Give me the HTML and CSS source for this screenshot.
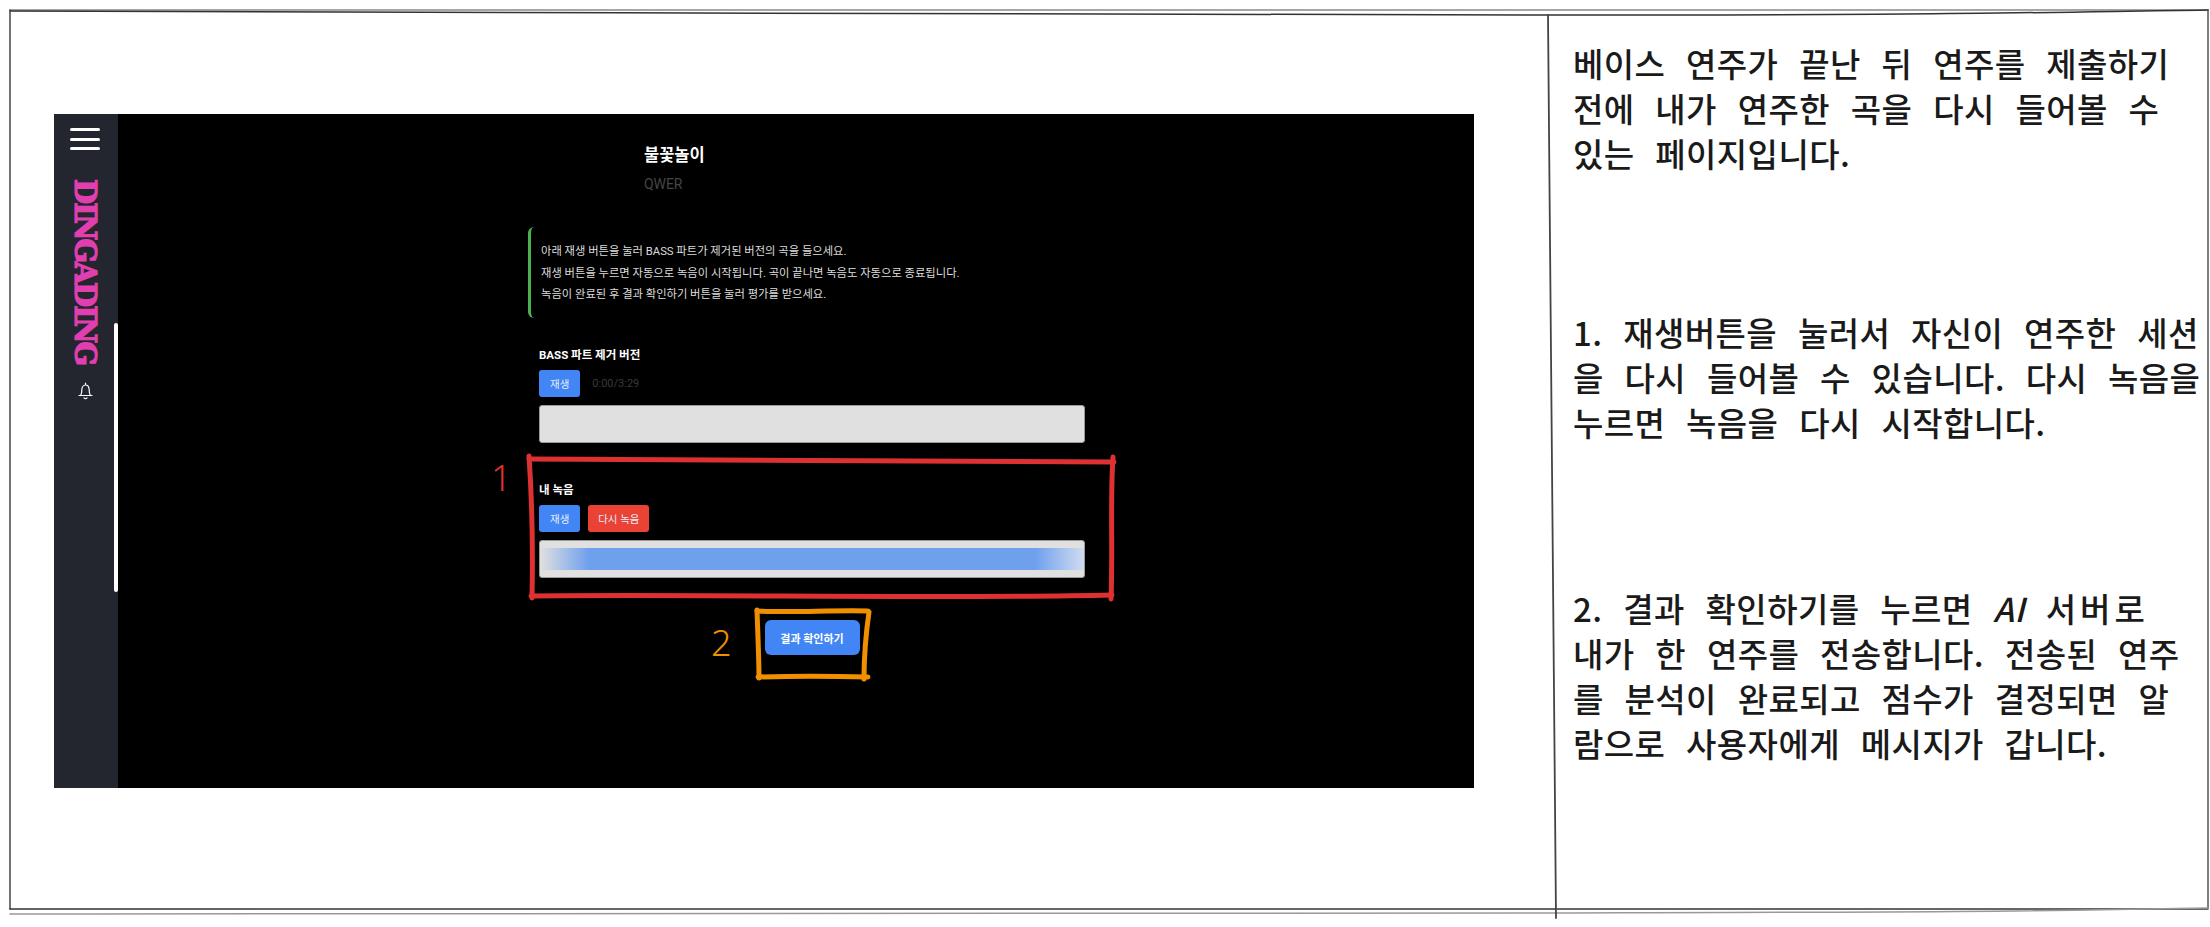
FILE: index.html
```html
<!DOCTYPE html>
<html>
    <head>
        <title>녹음 확인 페이지</title>
        <link rel="stylesheet" href="styles.css">
    </head>
    <body>
        <div class="sheet">
            <div class="left">
                <div class="shot">
                    <div class="sidebar">
                        <div class="burger"><span></span><span></span><span></span></div>
                        <div class="logo">DINGADING</div>
                        <svg class="bell" width="17" height="19" viewBox="0 0 17 19">
                            <path d="M2 14.500h13M3.600 14.500c1-1.400 1.200-2.600 1.200-5.200 0-3 1.500-5.300 3.700-5.300s3.700 2.300 3.700 5.300c0 2.600.2 3.800 1.200 5.200M8.500 2v2M7 16.800c.8.800 2.200.8 3 0" fill="none" stroke="#fff" stroke-width="1.200" stroke-linecap="round"/>
                        </svg>
                        <div class="scrollbar"></div>
                    </div>
                    <div class="main">
                        <div class="content">
                            <h1 class="song">불꽃놀이</h1>
                            <p class="artist">QWER</p>
                            <div class="notice">
                                <p>아래 재생 버튼을 눌러 BASS 파트가 제거된 버전의 곡을 들으세요.</p>
                                <p>재생 버튼을 누르면 자동으로 녹음이 시작됩니다. 곡이 끝나면 녹음도 자동으로 종료됩니다.</p>
                                <p>녹음이 완료된 후 결과 확인하기 버튼을 눌러 평가를 받으세요.</p>
                            </div>
                            <h2 class="track-title">BASS 파트 제거 버전</h2>
                            <div class="controls">
                                <button class="btn">재생</button>
                                <span class="time">0:00/3:29</span>
                            </div>
                            <div class="wave"></div>
                            <h2 class="track-title second">내 녹음</h2>
                            <div class="controls">
                                <button class="btn">재생</button>
                                <button class="btn red">다시 녹음</button>
                            </div>
                            <div class="wave"><div class="wave-fill"></div></div>
                            <div class="result-row">
                                <button class="result-btn">결과 확인하기</button>
                            </div>
                        </div>
                    </div>
                </div>
            </div>
            <div class="desc">
                <p class="para first">베이스 연주가 끝난 뒤 연주를 제출하기<br>전에 내가 연주한 곡을 다시 들어볼 수<br>있는 페이지입니다.</p>
                <p class="para second">1. 재생버튼을 눌러서 자신이 연주한 세션<br>을 다시 들어볼 수 있습니다. 다시 녹음을<br>누르면 녹음을 다시 시작합니다.</p>
                <p class="para third">2. 결과 확인하기를 누르면 <i>AI</i> <span class="wide">서버로</span><br>내가 한 연주를 전송합니다. 전송된 연주<br>를 분석이 완료되고 점수가 결정되면 알<br>람으로 사용자에게 메시지가 갑니다.</p>
            </div>

            <!-- 손으로 그린 테두리, 표시 -->
            <svg class="sketch" width="2210" height="927" viewBox="0 0 2210 927">
                <g fill="none" stroke-linecap="round">
                    <path d="M10 10H2208" stroke="#888" stroke-width="1.500"/>
                    <path d="M10 11C500 12 1100 15 1530 15S2000 13 2208 10" stroke="#333" stroke-width="1.500"/>
                    <path d="M10 10V909" stroke="#444" stroke-width="1.500"/>
                    <path d="M2208 10V908" stroke="#555" stroke-width="1.500"/>
                    <path d="M10 909H2208" stroke="#333" stroke-width="1.500"/>
                    <path d="M10 914C600 913 1200 914 1560 913S2000 912 2208 908" stroke="#999" stroke-width="1.500"/>
                    <path d="M1548 15C1549 300 1552 600 1556 918" stroke="#444" stroke-width="1.800"/>

                    <g stroke="#de3232" stroke-width="5">
                        <path d="M529 459C700 461 950 460 1114 462"/>
                        <path d="M531 596C700 594 950 599 1112 595"/>
                        <path d="M529 456C532 500 533 550 532 598"/>
                        <path d="M1113 457C1110 500 1113 550 1111 599"/>
                    </g>
                    <g stroke="#f09000" stroke-width="5">
                        <path d="M757 611C790 613 830 610 868 611"/>
                        <path d="M758 677C790 676 830 676 868 677"/>
                        <path d="M757 610C758 640 759 660 759 678"/>
                        <path d="M869 612C865 640 864 660 864 679"/>
                    </g>
                </g>
            </svg>
            <span class="mark mark-one">1</span>
            <span class="mark mark-two">2</span>
        </div>
    </body>
</html>
```

FILE: styles.css
```css
* {
    box-sizing: border-box;
}

body {
    margin: 0;
    background-color: #fff;
    font-family: Roboto, "Noto Sans CJK KR", sans-serif;
}

h1, h2, p {
    margin: 0;
}

.sheet {
    position: relative;
    display: flex;
    width: 2210px;
    height: 927px;
    overflow: hidden;
}

.left {
    width: 1573px;
    padding: 114px 0 0 54px;
}

.shot {
    display: flex;
    width: 1420px;
    height: 674px;
    background-color: #000;
}

/* sidebar */
.sidebar {
    position: relative;
    display: flex;
    flex-direction: column;
    align-items: center;
    flex-shrink: 0;
    width: 64px;
    padding: 14px 2px 0 0;
    background-color: #23262f;
}

.burger {
    display: flex;
    flex-direction: column;
    gap: 6.500px;
    width: 30px;
}

.burger span {
    height: 3px;
    border-radius: 2px;
    background-color: #fff;
}

.logo {
    margin-top: 29px;
    writing-mode: vertical-rl;
    font-family: "DejaVu Serif", serif;
    font-weight: 700;
    font-size: 29px;
    line-height: 26px;
    letter-spacing: -1.900px;
    color: #e13fb0;
    -webkit-text-stroke: 1.200px #e13fb0;
}

.bell {
    margin-top: 17px;
}

.scrollbar {
    position: absolute;
    top: 209px;
    right: 0;
    width: 4px;
    height: 269px;
    border-radius: 2px;
    background-color: #fff;
}

/* main */
.main {
    flex: 1;
    padding: 32px 0 0 421px;
    color: #fff;
}

.content {
    width: 546px;
}

.song {
    margin-left: 105px;
    font-size: 16.500px;
    line-height: 20px;
    font-weight: 700;
}

.artist {
    margin: 10px 0 0 105px;
    font-size: 14px;
    line-height: 16px;
    color: #454545;
}

.notice {
    margin: 35px 0 0 -11px;
    padding: 14px 0 0 10px;
    height: 91px;
    border-left: 3px solid #4caf50;
    border-radius: 6px;
    font-size: 11.300px;
    line-height: 21.500px;
    color: #ddd;
}

.track-title {
    margin-top: 29px;
    font-size: 11.500px;
    line-height: 16px;
    font-weight: 700;
}

.track-title.second {
    margin-top: 39px;
}

.controls {
    display: flex;
    align-items: center;
    gap: 8px;
    margin-top: 7px;
}

.btn {
    height: 27px;
    padding: 0 11px;
    border: none;
    border-radius: 3px;
    background-color: #4285f4;
    color: #e8eefc;
    font-family: inherit;
    font-size: 10.500px;
}

.btn.red {
    width: 61px;
    padding: 0;
    background-color: #ea4335;
}

.time {
    margin-left: 4px;
    font-size: 11px;
    color: #3a3a3a;
}

.wave {
    display: flex;
    align-items: center;
    height: 38px;
    margin-top: 8px;
    border: 1px solid #999;
    border-radius: 3px;
    background-color: #e0e0e0;
}

.wave-fill {
    width: 100%;
    height: 22px;
    background: linear-gradient(to right, #e0e0e0, #6fa0ee 9%, #6fa0ee 91%, #d0dcf0);
}

.result-row {
    display: flex;
    justify-content: center;
    margin-top: 42px;
}

.result-btn {
    width: 95px;
    height: 35px;
    border: none;
    border-radius: 6px;
    background-color: #4285f4;
    color: #fff;
    font-family: inherit;
    font-size: 11px;
    font-weight: 700;
}

/* 오른쪽 설명 */
.desc {
    flex: 1;
    font-family: "Noto Sans CJK KR", sans-serif;
    font-size: 33px;
    font-weight: 500;
    line-height: 45px;
    letter-spacing: .4px;
    word-spacing: 13px;
    color: #1a1a1a;
    white-space: nowrap;
}

.wide {
    letter-spacing: 4px;
}

.para.first {
    margin-top: 41px;
}

.para.second {
    margin-top: 134px;
}

.para.third {
    margin-top: 141px;
}

.sketch {
    position: absolute;
    top: 0;
    left: 0;
    pointer-events: none;
}

.mark {
    position: absolute;
    font-family: "Noto Sans", sans-serif;
    font-size: 36px;
    line-height: 40px;
    font-weight: 300;
}

.mark-one {
    top: 458px;
    left: 491px;
    color: #de3232;
}

.mark-two {
    top: 623px;
    left: 711px;
    color: #f09000;
}
```
